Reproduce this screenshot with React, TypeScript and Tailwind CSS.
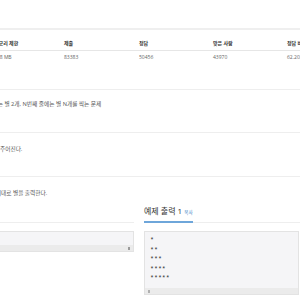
import React from "react";

const heads = ["시간 제한", "메모리 제한", "제출", "정답", "맞은 사람", "정답 비율"];
const vals = ["1 초", "128 MB", "83383", "50456", "43970", "62.203%"];

export default function App() {
  return (
    <div
      className="w-[300px] h-[300px] overflow-hidden bg-white"
      style={{ fontFamily: "'Open Sans', 'Noto Sans CJK KR', sans-serif" }}
    >
      <div className="pt-[28px]">
        <div className="h-[2px] bg-[#efefef]" />
        <div className="ml-[-84px] w-[441px] grid grid-cols-[74px_70px_75px_74px_74px_74px] h-[20px] pt-[9px] text-[5px] leading-[8px] font-bold text-[#333] whitespace-nowrap">
          {heads.map((h) => (
            <div key={h} className="px-[4px]">{h}</div>
          ))}
        </div>
        <div className="h-px bg-[#e6e6e6]" />
        <div className="ml-[-84px] w-[441px] grid grid-cols-[74px_70px_75px_74px_74px_74px] h-[14px] pt-[2px] text-[5px] leading-[8px] text-[#666] whitespace-nowrap">
          {vals.map((v) => (
            <div key={v} className="px-[4px]">{v}</div>
          ))}
        </div>

        <div className="mt-[24px] h-px bg-[#eeeeee]" />
        <div className="mt-[10px] ml-[-72px] text-[5.7px] leading-[8px] text-[#555] whitespace-nowrap">
          첫째 줄에는 별 1개, 둘째 줄에는 별 2개, N번째 줄에는 별 N개를 찍는 문제
        </div>

        <div className="mt-[24px] h-px bg-[#eeeeee]" />
        <div className="mt-[12px] ml-[-68px] text-[5.7px] leading-[8px] text-[#555] whitespace-nowrap">
          첫째 줄에 N(1 ≤ N ≤ 100)이 주어진다.
        </div>

        <div className="mt-[23px] h-px bg-[#eeeeee]" />
        <div className="mt-[12px] ml-[-72px] text-[5.7px] leading-[8px] text-[#555] whitespace-nowrap">
          첫째 줄부터 N번째 줄까지 차례대로 별을 출력한다.
        </div>

        <div className="mt-[9px] ml-[-77px] flex gap-[10px]">
          <div className="w-[211px] shrink-0">
            <div className="flex border-b border-[#eeeeee]">
              <span className="inline-block pb-[4px] mb-[-1px] border-b-2 border-[#6ea6da] text-[8px] leading-[10px] text-[#333] whitespace-nowrap">
                예제 입력 1 <span className="text-[4.5px] text-[#3b82c4]">복사</span>
              </span>
            </div>
            <div className="mt-[8px] border border-[#e3e3e3] bg-[#f5f5f7]">
              <div className="h-[13px] pl-[5px] pt-[2px] text-[6.6px] leading-[9.5px] text-[#333]" style={{ fontFamily: "'Liberation Mono', monospace" }}>
                5
              </div>
              <div className="h-[6px] bg-[#ebebeb] flex items-center justify-end pr-[3px]">
                <span className="w-[2px] h-[3px] bg-[#9a9a9a]" />
              </div>
            </div>
          </div>
          <div className="w-[160px] shrink-0">
            <div className="flex border-b border-[#eeeeee]">
              <span className="inline-block pb-[4px] mb-[-1px] border-b-2 border-[#6ea6da] text-[8px] leading-[10px] text-[#333] whitespace-nowrap">
                예제 출력 1 <span className="text-[4.5px] text-[#3b82c4]">복사</span>
              </span>
            </div>
            <div className="mt-[8px] w-[155px] border border-[#e3e3e3] bg-[#f5f5f7]">
              <div
                className="pl-[5px] pt-[4px] pb-[4.5px] text-[6.6px] leading-[9.5px] text-[#333] whitespace-pre"
                style={{ fontFamily: "'Liberation Mono', monospace" }}
              >
                {"*\n**\n***\n****\n*****"}
              </div>
              <div className="h-[6px] bg-[#ebebeb] flex items-center pl-[3px]">
                <span className="w-[2px] h-[3px] bg-[#b0b0b0]" />
              </div>
            </div>
          </div>
        </div>
      </div>
    </div>
  );
}
